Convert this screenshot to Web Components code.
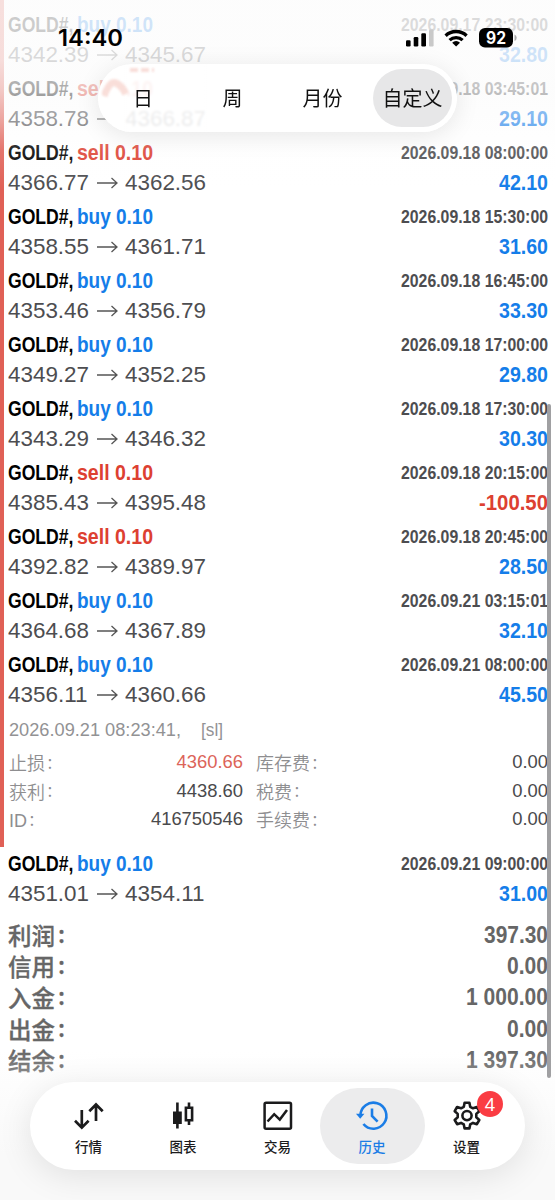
<!DOCTYPE html>
<html lang="zh">
<head>
<meta charset="utf-8">
<title>历史</title>
<style>
body{margin:0;background:#fff;font-family:"Liberation Sans","Noto Sans CJK SC",sans-serif}
</style>
</head>
<body>
<history-screen></history-screen>
<script>
const define = (name, html, setup) => {
  const t = document.createElement('template');
  t.innerHTML = html;
  customElements.define(name, class extends HTMLElement {
    connectedCallback() {
      if (this.shadowRoot) return;
      this.attachShadow({mode: 'open'}).append(t.content.cloneNode(true));
      if (setup) setup(this, this.shadowRoot);
    }
  });
};

// One line of text condensed or widened to an exact width.
define('fit-text', `<style>
:host{display:block;flex:none;white-space:nowrap;line-height:30px;height:30px}
span{display:inline-block;transform-origin:0 50%}
</style><span><slot></slot></span>`, (el, root) => {
  const w = +el.getAttribute('w'), s = root.querySelector('span');
  el.style.fontSize = el.getAttribute('size') + 'px';
  s.style.transform = `scaleX(${w / s.getBoundingClientRect().width})`;
  el.style.width = w + 'px';
});

define('deal-row', `<style>
:host{display:flex;flex-direction:column;height:64px;padding:0 7px 0 7.5px;box-sizing:border-box;color:#4d4d50}
div{display:flex;height:30px;align-items:center}
.n{font-weight:bold}
.g{margin-left:auto}
.sym{color:#000;margin-right:4px}
.k{color:#147de9}.r{color:#dd4031}
.arr{width:21px;height:12px;position:absolute;left:96.5px;margin-top:-1px}
.to{margin-left:auto}
.pair{width:199px}
</style>
<div class="n"></div><div class="p"></div>`, (el, root) => {
  const [side, from, to, date, val] = el.getAttribute('deal').split('|');
  const vw = {5: 49, 7: 69}[val.length];
  const pw = s => s.endsWith('11') ? 79.5 : 81;
  root.querySelector('.n').innerHTML =
    `<fit-text class="sym" w="65.5" size="22.5">GOLD#,</fit-text><fit-text class="${side === 'buy' ? 'k' : 'r'}" w="76" size="22.5">${side} 0.10</fit-text>` +
    `<fit-text class="g" w="147" size="17.5">${date}</fit-text>`;
  root.querySelector('.p').innerHTML =
    `<fit-text w="${pw(from)}" size="22">${from}</fit-text>` +
    `<svg width="21" height="12" viewBox="0 0 21 12" style="margin:-1px 7px 0 ${89 - pw(from)}px"><path d="M0 6H20M14.5 1L20 6L14.5 11" fill="none" stroke="#555" stroke-width="1.3"/></svg>` +
    `<fit-text w="${pw(to)}" size="22">${to}</fit-text>` +
    `<fit-text class="g n ${val[0] === '-' ? 'r' : 'k'}" w="${vw}" size="22">${val}</fit-text>`;
});

define('deal-detail', `<style>
:host{display:block;height:135px;padding:1px 7px 0 9px;box-sizing:border-box;font-size:18.4px;color:#929294}
.top{height:30px;display:flex;gap:20px}
.grid{display:grid;grid-template-columns:60px 174px 90px 1fr;grid-auto-rows:28.5px;line-height:28.5px;margin-top:3px}
.grid>*{white-space:nowrap;height:28.5px}
.v{text-align:right;color:#4a4a4c}
.l{font-family:"Noto Sans CJK SC",sans-serif;font-weight:350;font-size:18px;color:#8e8e90}
.l i{font-style:normal;position:relative;left:2.5px;top:-1.5px}
.l u{text-decoration:none;font-family:"Liberation Sans"}
.m{margin-left:13px}
.red{color:#dc6459}
</style>
<div class="top"><fit-text w="172" size="18">2026.09.21 08:23:41,</fit-text><fit-text w="22" size="18">[sl]</fit-text></div>
<div class="grid">
<span class="l">止损<i>:</i></span><span class="v red">4360.66</span><span class="l m">库存费<i>:</i></span><span class="v">0.00</span>
<span class="l">获利<i>:</i></span><span class="v">4438.60</span><span class="l m">税费<i>:</i></span><span class="v">0.00</span>
<span class="l"><u>ID</u><i>:</i></span><span class="v">416750546</span><span class="l m">手续费<i>:</i></span><span class="v">0.00</span>
</div>`);

define('total-row', `<style>
:host{display:flex;align-items:center;justify-content:space-between;height:31.3px;padding:0 7px 0 8px;font-weight:bold;color:#666}
b{font:500 23.5px/30px "Noto Sans CJK SC",sans-serif;-webkit-text-stroke:.3px #666}
i{font-style:normal;position:relative;left:3px;top:-2px}
</style><b><slot></slot><i>:</i></b><div></div>`, (el, root) => {
  const v = el.getAttribute('value');
  root.querySelector('div').innerHTML = `<fit-text w="${{4: 41, 6: 64, 8: 82}[v.length]}" size="23">${v}</fit-text>`;
});

define('status-bar', `<style>
:host{display:flex;position:absolute;left:58px;top:21px;width:456px;height:33px;align-items:center;font-family:Inter,sans-serif;font-weight:600;color:#000}
svg{margin-left:auto}
</style><fit-text w="65" size="22.5">14:40</fit-text>
<svg width="112" height="26" viewBox="402 24 112 26" overflow="visible">
<rect x="406" y="39.2" width="4.6" height="6.3" rx="1.2"/><rect x="413.7" y="36" width="4.6" height="9.5" rx="1.2"/><rect x="421.3" y="32.2" width="4.7" height="13.3" rx="1.2"/><rect x="429" y="28.5" width="4.6" height="17" rx="1.2" fill="#c9c9c9"/>
<g fill="none" stroke="#000" stroke-width="3.3"><path d="M445.6 34.7a15.2 15.2 0 0 1 21 0"/><path d="M449.6 39.1a9.5 9.5 0 0 1 13 0"/></g><path d="M456.1 45.6l-3.9-3.9a5.6 5.6 0 0 1 7.8 0z"/>
<rect x="479" y="27" width="34" height="19.5" rx="6"/><path d="M514.5 33.5v6.5q2.2-.8 2.2-3.2t-2.2-3.3z" fill="#aaa"/>
<text x="496" y="43" font-family="Inter" font-weight="700" font-size="17" fill="#fff" text-anchor="middle" textLength="20" lengthAdjust="spacingAndGlyphs">92</text>
</svg>`);

define('period-tabs', `<style>
:host{display:grid;grid-template-columns:90px 89px 91px 79px;column-gap:0;position:absolute;left:98px;top:64px;width:359px;height:68px;box-sizing:border-box;padding:5px 0;border-radius:34px;background:linear-gradient(90deg,#fff 5px,#fff 22px,#ffffffd0 30px,#ffffffd0 105px,#fff 113px);backdrop-filter:blur(1.3px);box-shadow:0 4px 24px #00000018;font:20px/58px "Noto Sans CJK SC",sans-serif;color:#111;text-align:center}
.on{background:#e7e7e8;border-radius:29px;white-space:nowrap;margin-left:5px;margin-right:-5px}
.lens{position:absolute;left:4px;top:2px;filter:blur(1.2px);z-index:-1}
</style><svg class="lens" width="56" height="34" viewBox="0 0 56 34" fill="none" stroke="#f9ded9" stroke-width="7"><path d="M2 30Q8 14 14 17T24 28"/><path d="M28 4H52" stroke-width="4" stroke-dasharray="8 3"/></svg><span>日</span><span>周</span><span>月份</span><span class="on">自定义</span>`);

define('nav-item', `<style>
:host{display:flex;flex-direction:column;align-items:center;width:105px;height:76px;margin:0 -5.25px;border-radius:38px;color:#1b1b1c;position:relative}
:host([on]){background:#ececed;color:#1b7de6}
::slotted(svg){margin-top:13px;width:32px;height:32px;overflow:visible}
span{font:500 13.5px/20px "Noto Sans CJK SC",sans-serif;margin-top:3px}
b{position:absolute;left:63px;top:2.5px;width:26px;height:26px;border-radius:50%;background:#fa3c43;color:#fff;font:18px/26px "Noto Sans",sans-serif;text-align:center}
b:empty{display:none}
</style><slot name="icon"></slot><span><slot></slot></span><b></b>`, (el, root) => {
  root.querySelector('b').textContent = el.getAttribute('badge') || '';
});

define('tab-bar', `<style>
:host{display:flex;justify-content:center;position:absolute;left:30px;top:1082px;width:495px;height:88px;box-sizing:border-box;padding-top:6px;border-radius:44px;background:#fff;box-shadow:0 6px 34px #0000001a}
</style>
<nav-item><svg slot="icon" viewBox="0 0 32 32" fill="none" stroke="currentColor" stroke-width="2.7"><path d="M8.8 9V26M2 19.8L8.8 26.6L15.6 19.8M23 20V3.5M16.3 10.2L23 3.5L29.7 10.2"/></svg>行情</nav-item>
<nav-item><svg slot="icon" viewBox="0 0 32 32" fill="none" stroke="currentColor" stroke-width="2.6"><path d="M10.4 1.5V27.5M22 1.5V6.5M22 19.5V24"/><path d="M6 10.5h8.8v12.5H6z" fill="currentColor" stroke="none"/><path d="M18.9 6.8h6.2v12.4h-6.2z"/></svg>图表</nav-item>
<nav-item><svg slot="icon" viewBox="0 0 32 32" fill="none" stroke="currentColor" stroke-width="2.5"><rect x="2.6" y="1.8" width="26.4" height="26" rx="1.5"/><path d="M5.5 20.5L12.2 13.2L17.8 18.6L25 9"/></svg>交易</nav-item>
<nav-item on><svg slot="icon" viewBox="0 0 32 32" fill="none" stroke="currentColor" stroke-width="2.6"><path d="M4.4 14.6A13 13 0 1 1 7.4 23"/><path d="M0 12.8h8.4l-4.2 5z" fill="currentColor" stroke="none"/><path d="M16 7.5V15L21.6 20.6"/></svg>历史</nav-item>
<nav-item badge="4"><svg slot="icon" viewBox="0 0 32 32" fill="none" stroke="currentColor" stroke-width="2.6" stroke-linejoin="round"><path d="M13.6 1.8h4.8l.8 4 2.8 1.5 3.9-1.3 2.4 4.2-3 2.7v3.4l3 2.7-2.4 4.2-3.9-1.3-2.8 1.5-.8 4h-4.8l-.8-4-2.8-1.5-3.9 1.3-2.4-4.2 3-2.7v-3.4l-3-2.7 2.4-4.2L10 7.3l2.8-1.5z"/><circle cx="16" cy="14.6" r="4.6"/></svg>设置</nav-item>`);

define('history-screen', `<style>
:host{display:block;position:relative;width:555px;height:1200px;overflow:hidden;background:#fff}
.list{padding-top:10px}
.totals{padding-top:6px}
.mark{position:absolute;left:0;top:0;width:4px;height:847px;background:#e06056}
.scroll{position:absolute;left:547px;top:404px;width:4px;height:674px;border-radius:2px;background:#a0a0a2}
.fade{position:absolute;inset:0 0 auto;height:190px;background:linear-gradient(#fcfcfcd0 0,#fcfcfccc 60px,#fbfbfbac 90px,#fbfbfb70 120px,#fcfcfc24 150px,#fff0)}
.low{position:absolute;inset:auto 0 0;height:150px;background:linear-gradient(#fafafa00,#f9f9f9 70%)}
</style>
<div class="list"></div>
<div class="mark"></div><div class="fade"></div><div class="low"></div><div class="scroll"></div>
<status-bar></status-bar><period-tabs></period-tabs><tab-bar></tab-bar>`, (el, root) => {
  const deals = [
    'buy|4342.39|4345.67|2026.09.17 23:30:00|32.80', 'sell|4358.78|4366.87|2026.09.18 03:45:01|29.10',
    'sell|4366.77|4362.56|2026.09.18 08:00:00|42.10', 'buy|4358.55|4361.71|2026.09.18 15:30:00|31.60',
    'buy|4353.46|4356.79|2026.09.18 16:45:00|33.30', 'buy|4349.27|4352.25|2026.09.18 17:00:00|29.80',
    'buy|4343.29|4346.32|2026.09.18 17:30:00|30.30', 'sell|4385.43|4395.48|2026.09.18 20:15:00|-100.50',
    'sell|4392.82|4389.97|2026.09.18 20:45:00|28.50', 'buy|4364.68|4367.89|2026.09.21 03:15:01|32.10',
    'buy|4356.11|4360.66|2026.09.21 08:00:00|45.50', null, 'buy|4351.01|4354.11|2026.09.21 09:00:00|31.00'];
  const totals = [['利润', '397.30'], ['信用', '0.00'], ['入金', '1 000.00'], ['出金', '0.00'], ['结余', '1 397.30']];
  root.querySelector('.list').innerHTML =
    deals.map(d => d ? `<deal-row deal="${d}"></deal-row>` : '<deal-detail></deal-detail>').join('') +
    `<div class="totals">${totals.map(t => `<total-row value="${t[1]}">${t[0]}</total-row>`).join('')}</div>`;
});
</script>
</body>
</html>
